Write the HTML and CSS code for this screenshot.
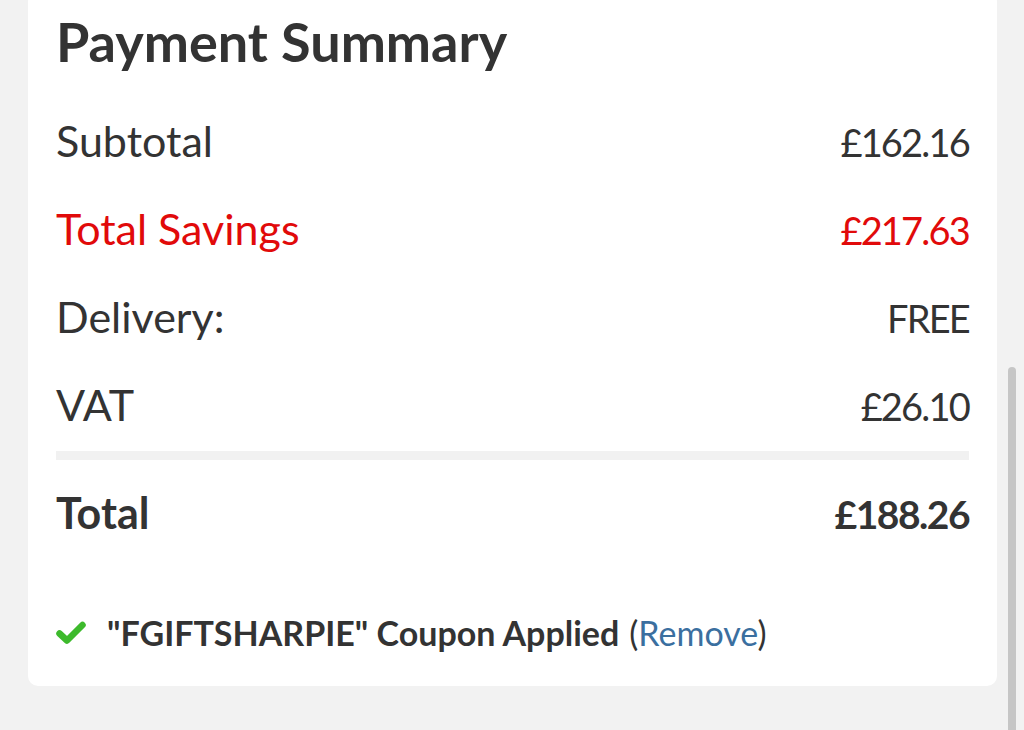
FILE: index.html
```html
<!DOCTYPE html>
<html>
<head>
<meta charset="utf-8">
<link rel="stylesheet" href="styles.css">
</head>
<body>
<div class="page">
  <div class="card">
    <h2 class="title">Payment Summary</h2>
    <div class="row"><span>Subtotal</span><span class="num">£162.16</span></div>
    <div class="row red"><span>Total Savings</span><span class="num">£217.63</span></div>
    <div class="row"><span>Delivery:</span><span class="num">FREE</span></div>
    <div class="row"><span>VAT</span><span class="num">£26.10</span></div>
    <div class="divider"></div>
    <div class="row total"><span>Total</span><span class="num">£188.26</span></div>
    <div class="coupon">
      <svg class="check" viewBox="0 0 30 24" width="30" height="24"><path d="M3.5 12.5 L11 19.5 L26.5 4" fill="none" stroke="#3dba2c" stroke-width="6.5" stroke-linecap="round" stroke-linejoin="round"/></svg>
      <span class="code">"FGIFTSHARPIE" Coupon Applied</span>
      <span class="paren">(<a class="remove">Remove</a>)</span>
    </div>
  </div>
  <div class="scrollbar"></div>
</div>
</body>
</html>
```
FILE: styles.css
```css
html, body {
  margin: 0;
  padding: 0;
  background: #f2f2f2;
  font-family: "Lato", "Open Sans", sans-serif;
  color: #333;
}
.page {
  position: relative;
  width: 1024px;
  height: 730px;
  overflow: hidden;
}
.card {
  margin: -8px 0 0 28px;
  width: 969px;
  box-sizing: border-box;
  background: #fff;
  border-radius: 10px;
  padding: 14px 28px 33px 28px;
}
.title {
  margin: 0 0 20px 0;
  font-size: 54px;
  font-weight: 700;
  line-height: 72px;
  color: #333;
}
.row {
  display: flex;
  justify-content: space-between;
  align-items: baseline;
  font-size: 43px;
  line-height: 52px;
  padding: 17px 0 18px;
}
.num {
  font-size: 38px;
  letter-spacing: -1.8px;
}
.red { color: #e10a0a; }
.divider {
  height: 9px;
  background: #f1f1f1;
  margin: 1px 0 12px;
}
.total {
  font-weight: 700;
  padding-top: 15px;
}
.total .num {
  font-size: 39px;
  letter-spacing: -1.5px;
}
.coupon {
  display: flex;
  align-items: center;
  margin-top: 55px;
  font-size: 34px;
  line-height: 40px;
}
.check { margin-right: 21px; }
.code { font-weight: 700; margin-right: 10px; }
.remove { color: #3b6f9f; }
.scrollbar {
  position: absolute;
  left: 1008px;
  top: 367px;
  width: 8px;
  height: 380px;
  border-radius: 4px;
  background: #c6c6c6;
}
```
